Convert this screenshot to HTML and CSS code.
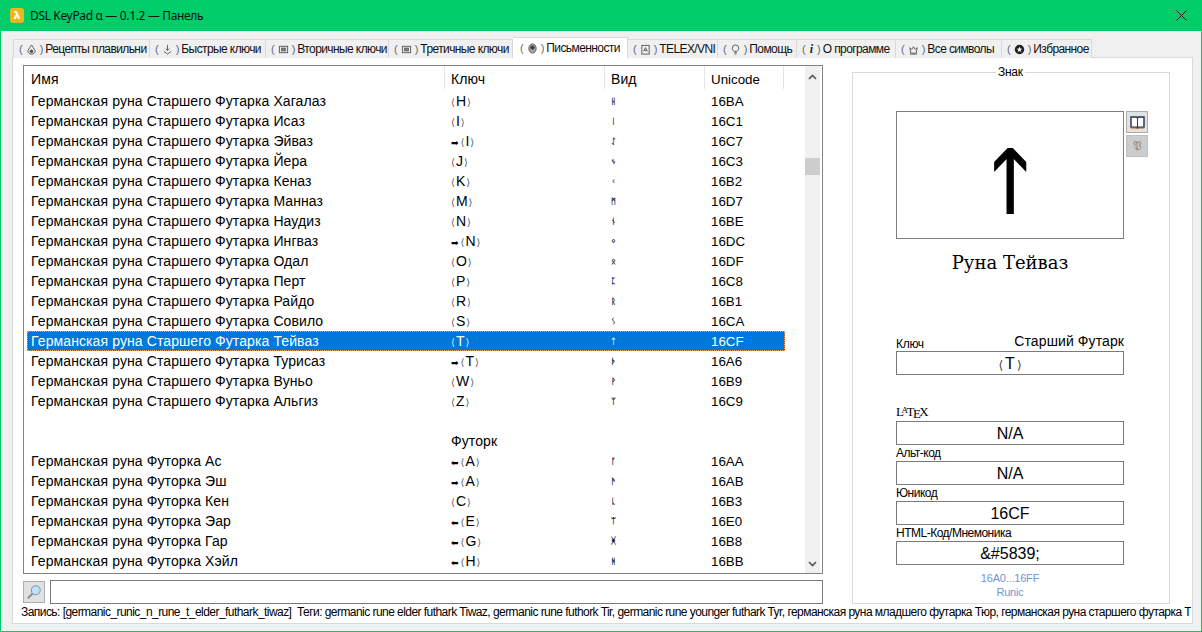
FILE: index.html
```html
<!DOCTYPE html>
<html lang="ru">
<head>
<meta charset="utf-8">
<title>DSL KeyPad α — 0.1.2 — Панель</title>
<link rel="stylesheet" href="styles.css">
</head>
<body>
<div class="window">
  <header class="titlebar">
    <span class="app-icon">λ</span>
    <span class="app-title">DSL KeyPad α — 0.1.2 — Панель</span>
    <svg class="close" viewBox="0 0 11 11"><path d="M.5.5l10 10M10.5.5l-10 10"/></svg>
  </header>
  <nav class="tabs">
    <div class="tab"><span class="par">(</span><svg class="ti" viewBox="0 0 12 12"><path d="M6 1L4 4 2 7.500C2 10 4 11 6 11s4-1 4-3.500L8 4z"/><circle cx="6" cy="8" r="1.500" fill="#444"/></svg><span class="par">)</span><span class="tl">Рецепты плавильни</span></div>
    <div class="tab"><span class="par">(</span><svg class="ti" viewBox="0 0 12 12"><path d="M6 1v6M4 5l2 2 2-2M2 8l4 3 4-3"/></svg><span class="par">)</span><span class="tl">Быстрые ключи</span></div>
    <div class="tab"><span class="par">(</span><svg class="ti" viewBox="0 0 12 12"><rect x="1.500" y="2.500" width="9" height="7"/><rect x="4" y="4.500" width="4" height="3" fill="#888"/></svg><span class="par">)</span><span class="tl">Вторичные ключи</span></div>
    <div class="tab"><span class="par">(</span><svg class="ti" viewBox="0 0 12 12"><rect x="1.500" y="2.500" width="9" height="7"/><rect x="4" y="4.500" width="4" height="3" fill="#888"/></svg><span class="par">)</span><span class="tl">Третичные ключи</span></div>
    <div class="tab active"><span class="par">(</span><svg class="ti" viewBox="0 0 12 12"><ellipse cx="6" cy="6" rx="4" ry="5" fill="#aaa"/><circle cx="6" cy="5" r="2" fill="#333"/></svg><span class="par">)</span><span class="tl">Письменности</span></div>
    <div class="tab"><span class="par">(</span><svg class="ti" viewBox="0 0 12 12"><rect x="2" y="1.500" width="8" height="9.500"/><path d="M4 8l2-4 2 4M4.500 7h3"/></svg><span class="par">)</span><span class="tl">TELEX/VNI</span></div>
    <div class="tab"><span class="par">(</span><svg class="ti" viewBox="0 0 12 12"><path d="M4.500 8C3 7 2.500 6 2.500 4.500a3.500 3.500 0 017 0C9.500 6 9 7 7.500 8zM4.500 9.500h3M5 11h2"/></svg><span class="par">)</span><span class="tl">Помощь</span></div>
    <div class="tab"><span class="par">(</span><span class="info">i</span><span class="par">)</span><span class="tl">О программе</span></div>
    <div class="tab"><span class="par">(</span><svg class="ti" viewBox="0 0 12 12"><path d="M2 4l2 2 2-3 2 3 2-2-1 6H3zM2 11h8"/></svg><span class="par">)</span><span class="tl">Все символы</span></div>
    <div class="tab"><span class="par">(</span><svg class="ti solid" viewBox="0 0 12 12"><path fill-rule="evenodd" d="M6 .8a5.200 5.200 0 110 10.400A5.200 5.200 0 016 .8zM6 3l.9 2 2.100.2-1.600 1.400.5 2.100L6 7.600 4.100 8.700l.5-2.100L3 5.200 5.100 5z"/></svg><span class="par">)</span><span class="tl">Избранное</span></div>
  </nav>
  <main class="pane">
    <section class="left">
      <div class="listbox">
        <div class="table">
          <div class="thead">
            <div class="th first ru">Имя</div><div class="th ru">Ключ</div><div class="th ru">Вид</div><div class="th">Unicode</div>
          </div>
          <div class="row"><div class="ru">Германская руна Старшего Футарка Хагалаз</div><div class="k"><i>⟨</i>H<i>⟩</i></div><div class="r">ᚺ</div><div>16BA</div></div>
          <div class="row"><div class="ru">Германская руна Старшего Футарка Исаз</div><div class="k"><i>⟨</i>I<i>⟩</i></div><div class="r">ᛁ</div><div>16C1</div></div>
          <div class="row"><div class="ru">Германская руна Старшего Футарка Эйваз</div><div class="k"><b>➡</b><i>⟨</i>I<i>⟩</i></div><div class="r">ᛇ</div><div>16C7</div></div>
          <div class="row"><div class="ru">Германская руна Старшего Футарка Йера</div><div class="k"><i>⟨</i>J<i>⟩</i></div><div class="r">ᛃ</div><div>16C3</div></div>
          <div class="row"><div class="ru">Германская руна Старшего Футарка Кеназ</div><div class="k"><i>⟨</i>K<i>⟩</i></div><div class="r">ᚲ</div><div>16B2</div></div>
          <div class="row"><div class="ru">Германская руна Старшего Футарка Манназ</div><div class="k"><i>⟨</i>M<i>⟩</i></div><div class="r">ᛗ</div><div>16D7</div></div>
          <div class="row"><div class="ru">Германская руна Старшего Футарка Наудиз</div><div class="k"><i>⟨</i>N<i>⟩</i></div><div class="r">ᚾ</div><div>16BE</div></div>
          <div class="row"><div class="ru">Германская руна Старшего Футарка Ингваз</div><div class="k"><b>➡</b><i>⟨</i>N<i>⟩</i></div><div class="r">ᛜ</div><div>16DC</div></div>
          <div class="row"><div class="ru">Германская руна Старшего Футарка Одал</div><div class="k"><i>⟨</i>O<i>⟩</i></div><div class="r">ᛟ</div><div>16DF</div></div>
          <div class="row"><div class="ru">Германская руна Старшего Футарка Перт</div><div class="k"><i>⟨</i>P<i>⟩</i></div><div class="r">ᛈ</div><div>16C8</div></div>
          <div class="row"><div class="ru">Германская руна Старшего Футарка Райдо</div><div class="k"><i>⟨</i>R<i>⟩</i></div><div class="r">ᚱ</div><div>16B1</div></div>
          <div class="row"><div class="ru">Германская руна Старшего Футарка Совило</div><div class="k"><i>⟨</i>S<i>⟩</i></div><div class="r">ᛊ</div><div>16CA</div></div>
          <div class="row selected"><div class="ru">Германская руна Старшего Футарка Тейваз</div><div class="k"><i>⟨</i>T<i>⟩</i></div><div class="r">ᛏ</div><div>16CF</div></div>
          <div class="row"><div class="ru">Германская руна Старшего Футарка Турисаз</div><div class="k"><b>➡</b><i>⟨</i>T<i>⟩</i></div><div class="r">ᚦ</div><div>16A6</div></div>
          <div class="row"><div class="ru">Германская руна Старшего Футарка Вуньо</div><div class="k"><i>⟨</i>W<i>⟩</i></div><div class="r">ᚹ</div><div>16B9</div></div>
          <div class="row"><div class="ru">Германская руна Старшего Футарка Альгиз</div><div class="k"><i>⟨</i>Z<i>⟩</i></div><div class="r">ᛉ</div><div>16C9</div></div>
          <div class="row"><div></div><div></div><div></div><div></div></div>
          <div class="row"><div></div><div class="ru">Футорк</div><div></div><div></div></div>
          <div class="row"><div class="ru">Германская руна Футорка Ас</div><div class="k"><b>⬅</b><i>⟨</i>A<i>⟩</i></div><div class="r">ᚪ</div><div>16AA</div></div>
          <div class="row"><div class="ru">Германская руна Футорка Эш</div><div class="k"><b>➡</b><i>⟨</i>A<i>⟩</i></div><div class="r">ᚫ</div><div>16AB</div></div>
          <div class="row"><div class="ru">Германская руна Футорка Кен</div><div class="k"><i>⟨</i>C<i>⟩</i></div><div class="r">ᚳ</div><div>16B3</div></div>
          <div class="row"><div class="ru">Германская руна Футорка Эар</div><div class="k"><b>⬅</b><i>⟨</i>E<i>⟩</i></div><div class="r">ᛠ</div><div>16E0</div></div>
          <div class="row"><div class="ru">Германская руна Футорка Гар</div><div class="k"><b>⬅</b><i>⟨</i>G<i>⟩</i></div><div class="r">ᚸ</div><div>16B8</div></div>
          <div class="row"><div class="ru">Германская руна Футорка Хэйл</div><div class="k"><b>⬅</b><i>⟨</i>H<i>⟩</i></div><div class="r">ᚻ</div><div>16BB</div></div>
        </div>
        <div class="scrollbar">
          <svg class="chev" viewBox="0 0 9 6"><path d="M1 5l3.500-3.500L8 5"/></svg>
          <div class="thumb"></div>
          <svg class="chev down" viewBox="0 0 9 6"><path d="M1 1l3.500 3.500L8 1"/></svg>
        </div>
      </div>
      <div class="search">
        <button class="search-btn"><svg viewBox="0 0 18 18"><circle cx="11" cy="7" r="5" fill="#bfe0f5" stroke="#7a9ab0" stroke-width="1.200"/><path d="M7.500 10.500L2 16" stroke="#8a8a8a" stroke-width="2.200"/></svg></button>
        <div class="search-input"></div>
      </div>
    </section>
    <aside class="group">
      <span class="legend">Знак</span>
      <div class="preview-row">
        <div class="preview"><span class="rune">ᛏ</span></div>
        <div class="tools">
          <button class="tool"><svg viewBox="0 0 16 14"><path d="M1 1h6l1 1 1-1h6v11H9l-1 1-1-1H1z" fill="#fff" stroke="#1f2f55" stroke-width="1.500"/><path d="M8 2v10" stroke="#1f2f55"/><path d="M1 13h14" stroke="#b8651c"/></svg></button>
          <button class="tool off">𝔓</button>
        </div>
      </div>
      <h1 class="sign-name">Руна Тейваз</h1>
      <div class="label-row key-row"><span class="lbl">Ключ</span><span class="script">Старший Футарк</span></div>
      <div class="field"><i>⟨</i>T<i>⟩</i></div>
      <div class="lbl latex-row"><span class="latex">L<sup>A</sup>T<sub>E</sub>X</span></div>
      <div class="field">N/A</div>
      <div class="lbl tight">Альт-код</div>
      <div class="field">N/A</div>
      <div class="lbl tight">Юникод</div>
      <div class="field">16CF</div>
      <div class="lbl tight">HTML-Код/Мнемоника</div>
      <div class="field">&amp;#5839;</div>
      <div class="block">16A0...16FF<br>Runic</div>
    </aside>
    <footer class="status">Запись: [germanic_runic_n_rune_t_elder_futhark_tiwaz]&nbsp; Теги: germanic rune elder futhark Tiwaz, germanic rune futhork Tir, germanic rune younger futhark Tyr, германская руна младшего футарка Тюр, германская руна старшего футарка Т</footer>
  </main>
</div>
</body>
</html>
```
FILE: styles.css
```css
* { box-sizing: border-box; }
html, body { margin: 0; padding: 0; }
body { width: 1202px; height: 632px; overflow: hidden; background: #f0f0f0; font-family: "Liberation Sans", Arial, sans-serif; color: #000; }
.window { width: 1202px; height: 632px; border: 1px solid #00cc6a; border-top: 0; background: #f0f0f0; }

.titlebar { height: 31px; margin: 0 -1px; background: #00cc6a; display: flex; align-items: center; padding: 0 10px; }
.app-icon { width: 14px; height: 15px; border-radius: 3px; background: #e8b81e; color: #fff; font: bold 11px/15px "DejaVu Sans", sans-serif; text-align: center; }
.app-title { margin-left: 6px; font: 12px "Noto Sans", sans-serif; letter-spacing: -.35px; color: #04140c; }
.close { width: 11px; height: 11px; margin-left: auto; margin-right: 5px; fill: none; stroke: #111; stroke-width: 1; }

.tabs { display: grid; grid-template-columns: 137px 116px 123px 124px 115px 90px 79px 99px 106px 90px; height: 26px; padding: 8px 0 0 12px; font-size: 12px; align-items: stretch; }
.tab { height: 19px; background: #f0f0f0; border: 1px solid #d9d9d9; border-bottom: 0; border-left-width: 0; padding-left: 4px; display: flex; align-items: center; white-space: pre; line-height: 18px; color: #111; overflow: hidden; }
.tab:first-child { border-left-width: 1px; }
.tab.active { height: 21px; margin-top: -2px; background: #fff; position: relative; z-index: 1; border-left-width: 0; padding-left: 6px; }
.tl { letter-spacing: -.6px; margin-left: 1px; }
.par { color: #667; margin: 0 1px; font-size: 11px; flex: none; }
.ti { width: 11px; height: 11px; fill: none; stroke: #555; stroke-width: 1; margin: 0 2px; flex: none; }
.ti.solid { fill: #222; stroke: none; }
.info { font: italic bold 12px "Liberation Serif", serif; margin: 0 3px; color: #222; }

.pane { height: 567px; border: 1px solid #d9d9d9; background: #fff; margin-left: 11px; width: 1181px; display: grid; grid-template-columns: 800px 318px; column-gap: 29px; grid-template-rows: 539px 19px; padding: 7px 0 0 10px; align-content: start; }

.left { display: flex; flex-direction: column; }
.listbox { width: 800px; height: 510px; border: 1px solid #828282; display: flex; font-size: 13.33px; }
.table { width: 781px; flex: none; }
.ru { font-size: 14px; letter-spacing: .1px; }
.thead { display: grid; grid-template-columns: 420px 160px 100px 80px; height: 25px; }
.th { padding-left: 6px; border-left: 1px solid #e5e5e5; margin-bottom: 2px; line-height: 27px; height: 23px; }
.th:last-child { border-right: 1px solid #e5e5e5; }
.th.first { border-left: 0; padding-left: 7px; }
.row { display: grid; grid-template-columns: 417px 160px 100px 81px; height: 20px; line-height: 21px; margin-left: 3px; width: 758px; white-space: nowrap; }
.row > div { padding-left: 7px; }
.row > div:first-child { padding-left: 4px; }
.row > .k { font-size: 14px; }
.row i { font: normal 10px "DejaVu Sans", sans-serif; color: #556; margin: 0 1px 0 0; }
.k i:last-child { margin: 0 0 0 1px; }
.row b { font: normal 9px "DejaVu Sans", sans-serif; margin-right: 2px; }
.row > .r { font: bold 8px/21px "DejaVu Sans", sans-serif; color: #101830; }
.selected { background: #0078d7; color: #fff; outline: 1px dotted #e8a060; outline-offset: -1px; }
.selected i, .row.selected > .r { color: #dde8f8; }

.scrollbar { width: 15px; background: #f0f0f0; display: flex; flex-direction: column; align-items: center; }
.chev { width: 9px; height: 6px; fill: none; stroke: #555; stroke-width: 1.600; flex: none; }
.chev:first-child { margin-top: 8px; }
.chev.down { margin-top: 386px; }
.thumb { width: 15px; height: 17px; background: #cdcdcd; margin-top: 78px; flex: none; }

.search { display: flex; gap: 5px; margin-top: 6px; }
.search-btn { width: 22px; height: 22px; margin-top: 1px; padding: 2px; background: #e1e1e1; border: 1px solid #adadad; }
.search-btn svg { display: block; width: 16px; height: 16px; }
.search-input { width: 773px; height: 24px; border: 1px solid #7a7a7a; background: #fff; }

.group { position: relative; width: 318px; height: 532px; margin-top: 7px; border: 1px solid #d9d9d9; padding: 38px 0 0 43px; }
.legend { position: absolute; top: -9px; left: 143px; background: #fff; padding: 0 2px; font-size: 12px; line-height: 16px; letter-spacing: -.3px; }
.preview-row { display: flex; gap: 2px; }
.preview { width: 228px; height: 128px; border: 1px solid #7f7f7f; text-align: center; font: 70px/139px "DejaVu Sans", sans-serif; }
.rune { display: inline-block; -webkit-text-stroke: 3.5px #000; transform: scaleX(1.15); }
.tools { display: flex; flex-direction: column; gap: 2px; }
.tool { width: 22px; height: 22px; padding: 2px; background: #e1e1e1; border: 1px solid #adadad; }
.tool svg { display: block; width: 15px; height: 13px; margin: 1px 0 0 1px; }
.tool.off { background: #ccc; border-color: #bfbfbf; color: #8a8a8a; font: 12px/16px "DejaVu Serif", serif; }

.sign-name { width: 228px; height: 24px; margin: 12px 0 -1px; font: 400 18px/24px "DejaVu Serif", serif; text-align: center; }
.label-row { width: 228px; height: 18px; margin-top: 59px; display: flex; justify-content: space-between; }
.lbl { font-size: 12px; letter-spacing: -.5px; }
.key-row .lbl { line-height: 22px; letter-spacing: -.3px; }
.script { font-size: 14px; line-height: 16px; letter-spacing: .1px; }
.field { width: 228px; height: 24px; border: 1px solid #7a7a7a; text-align: center; font-size: 16px; line-height: 23px; white-space: pre; }
.field i { font: normal 12px "DejaVu Sans", sans-serif; color: #334; margin: 0 2px; }
.latex-row { height: 18px; margin-top: 28px; line-height: 18px; }
.latex { font-family: "Liberation Serif", serif; font-size: 13px; }
.latex sup { font-size: 9px; vertical-align: 3px; line-height: 0; margin: 0 -1px 0 -2px; }
.latex sub { font-size: 13px; vertical-align: -2px; line-height: 0; margin: 0 -1px; }
.tight { height: 16px; line-height: 16px; }
.block { width: 228px; margin-top: 6px; text-align: center; font-size: 11px; line-height: 14px; letter-spacing: -.2px; color: #6f94d8; }

.status { grid-column: 1 / 3; width: 1170px; margin-left: -2px; overflow: hidden; white-space: nowrap; font-size: 12px; line-height: 16px; letter-spacing: -.55px; }
```
